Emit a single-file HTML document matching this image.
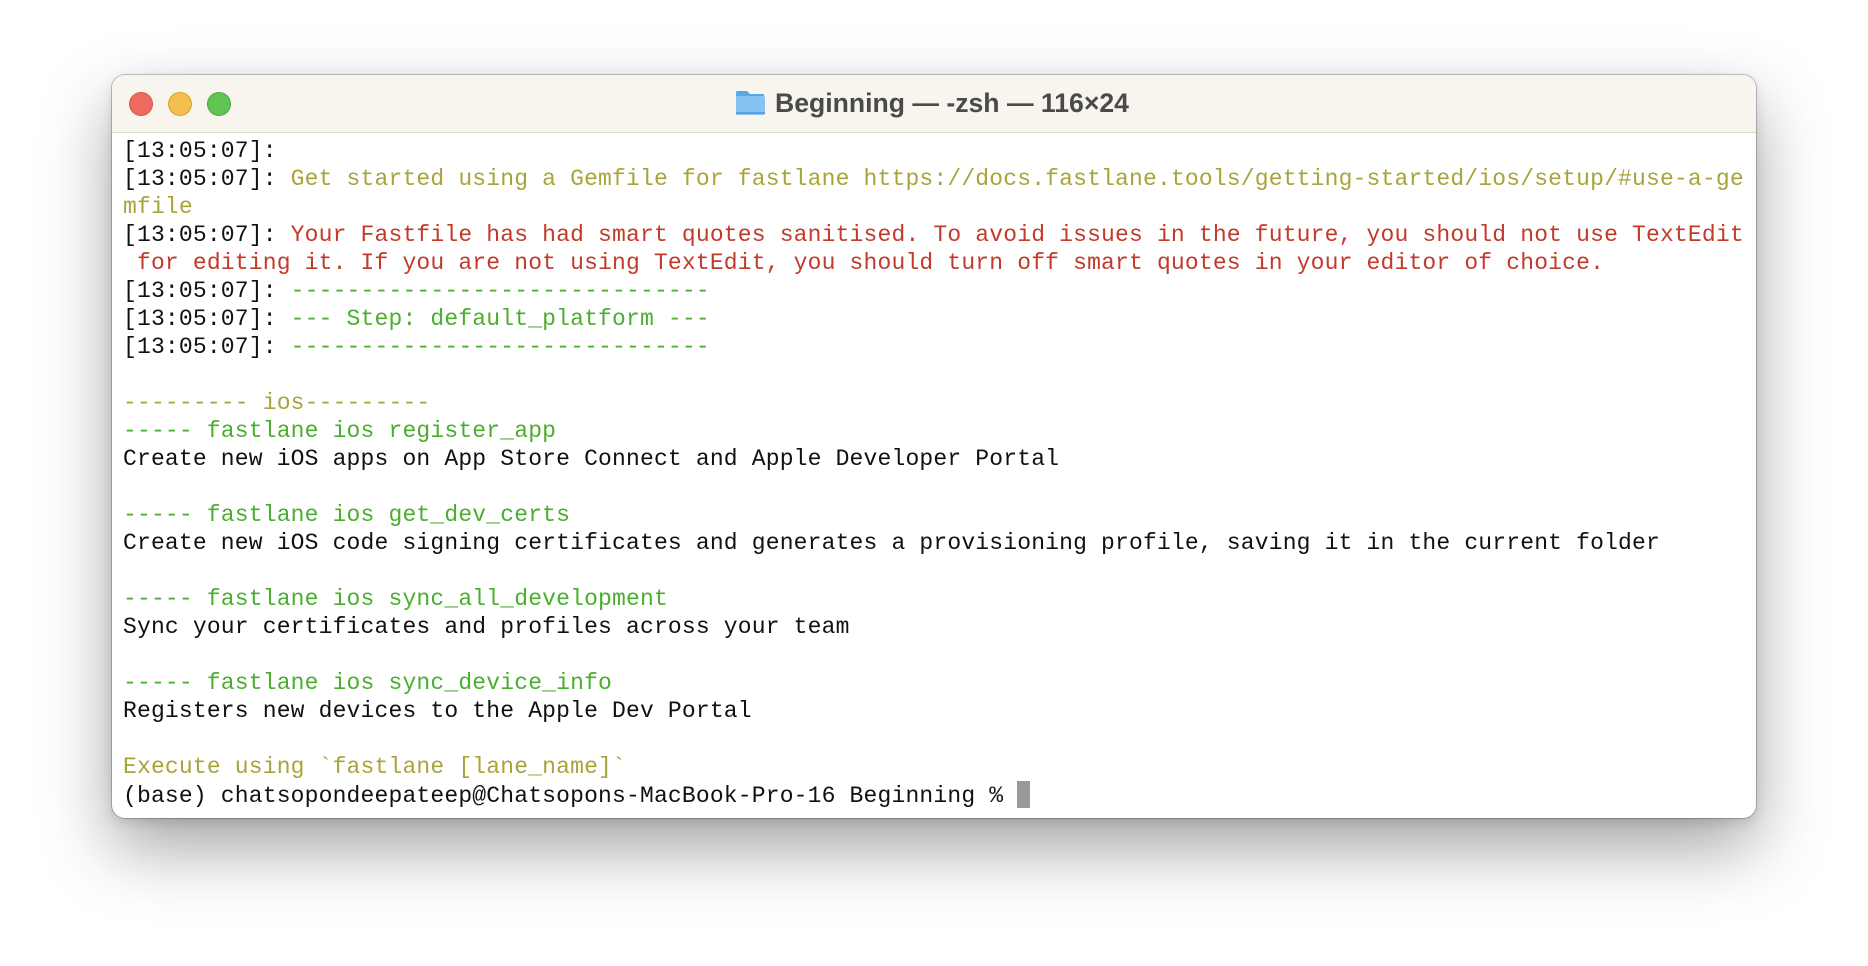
<!DOCTYPE html>
<html><head><meta charset="utf-8"><style>
html,body{margin:0;padding:0;background:#fff;width:1868px;height:966px;overflow:hidden}
.win{position:absolute;left:112px;top:75px;width:1644px;height:743px;border-radius:13px;background:#fff;
box-shadow:0 0 0 1px rgba(0,0,0,0.22),0 30px 70px rgba(0,0,0,0.36),0 4px 12px rgba(0,0,0,0.12);overflow:hidden}
.bar{position:absolute;left:0;top:0;right:0;height:57px;background:#f8f5ef;border-bottom:1px solid #dcd9d3}
.dot{position:absolute;top:17px;width:23px;height:23px;border-radius:50%}
.title{position:absolute;left:663px;top:10px;font:bold 26.6px "Liberation Sans",sans-serif;color:#4a4a4a;line-height:36px;white-space:nowrap}
.folder{position:absolute;left:-40px;top:3px}
pre{position:absolute;left:11px;top:62px;margin:0;font:23px "Liberation Mono",monospace;letter-spacing:0.17px;line-height:28px;color:#111}
.y{color:#a9a43a}.r{color:#c23a2a}.g{color:#4aae2e}
.cur{display:inline-block;width:13px;height:27px;background:#999;vertical-align:-6px}
</style></head><body>
<div class="win">
<div class="bar">
<div class="dot" style="left:17px;background:#ec6a5e;border:1px solid #d05a4f;width:22px;height:22px"></div>
<div class="dot" style="left:56px;background:#f4bf4f;border:1px solid #d9a43c;width:22px;height:22px"></div>
<div class="dot" style="left:95px;background:#61c554;border:1px solid #4ea844;width:22px;height:22px"></div>
<div class="title"><svg class="folder" width="31" height="28" viewBox="0 0 31 28"><path d="M2 3h10l3 3h14v19a2 2 0 0 1-2 2H3a2 2 0 0 1-2-2V4z" fill="#5aa7e8"/><rect x="1" y="8" width="29" height="19" rx="2" fill="#86c3f3"/><rect x="1" y="24" width="29" height="2" fill="#5d9fd8"/></svg>Beginning — -zsh — 116×24</div>
</div>
<pre>[13:05:07]:
[13:05:07]: <span class="y">Get started using a Gemfile for fastlane https://docs.fastlane.tools/getting-started/ios/setup/#use-a-ge
mfile</span>
[13:05:07]: <span class="r">Your Fastfile has had smart quotes sanitised. To avoid issues in the future, you should not use TextEdit
 for editing it. If you are not using TextEdit, you should turn off smart quotes in your editor of choice.</span>
[13:05:07]: <span class="g">------------------------------</span>
[13:05:07]: <span class="g">--- Step: default_platform ---</span>
[13:05:07]: <span class="g">------------------------------</span>

<span class="y">--------- ios---------</span>
<span class="g">----- fastlane ios register_app</span>
Create new iOS apps on App Store Connect and Apple Developer Portal

<span class="g">----- fastlane ios get_dev_certs</span>
Create new iOS code signing certificates and generates a provisioning profile, saving it in the current folder

<span class="g">----- fastlane ios sync_all_development</span>
Sync your certificates and profiles across your team

<span class="g">----- fastlane ios sync_device_info</span>
Registers new devices to the Apple Dev Portal

<span class="y">Execute using `fastlane [lane_name]`</span>
(base) chatsopondeepateep@Chatsopons-MacBook-Pro-16 Beginning % <span class="cur"></span></pre>
</div>
</body></html>
